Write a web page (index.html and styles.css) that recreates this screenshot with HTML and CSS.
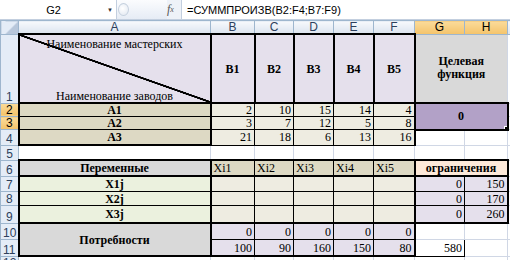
FILE: index.html
```html
<!DOCTYPE html>
<html lang="ru">
<head>
  <meta charset="UTF-8">
  <title>Транспортная задача</title>
  <link rel="stylesheet" href="styles.css">
</head>
<body>
  <div class="formula-bar">
    <div class="name-box"><span class="cell-ref">G2</span><span class="drop">&#9660;</span></div>
    <div class="splitter"><span class="knob"></span></div>
    <div class="fx"><i>f</i><sub>x</sub></div>
    <div class="formula">=СУММПРОИЗВ(B2:F4;B7:F9)</div>
  </div>

  <table class="sheet">
    <colgroup>
      <col class="c-rh">
      <col class="c-a">
      <col class="c-b">
      <col class="c-c">
      <col class="c-d">
      <col class="c-e">
      <col class="c-f">
      <col class="c-g">
      <col class="c-h">
      <col class="c-i">
    </colgroup>

    <tr class="r-head">
      <th class="corner"></th>
      <th class="ch">A</th>
      <th class="ch">B</th>
      <th class="ch">C</th>
      <th class="ch">D</th>
      <th class="ch">E</th>
      <th class="ch">F</th>
      <th class="ch sel">G</th>
      <th class="ch sel">H</th>
      <th class="ch"></th>
    </tr>

    <tr class="r1">
      <th class="rh">1</th>
      <td class="a1 thick">
        <div class="diag">
          <span>Наименование мастерских</span>
          <span>Наименование заводов</span>
        </div>
      </td>
      <td class="lav thick bold mid">B1</td>
      <td class="lav thick bold mid">B2</td>
      <td class="lav thick bold mid">B3</td>
      <td class="lav thick bold mid">B4</td>
      <td class="lav thick bold mid">B5</td>
      <td colspan="2" class="goal bold mid">Целевая<br>функция</td>
      <td class="gl"></td>
    </tr>

    <tr class="r2">
      <th class="rh sel">2</th>
      <td class="tan bold mid side">A1</td>
      <td class="beige num">2</td>
      <td class="beige num">10</td>
      <td class="beige num">15</td>
      <td class="beige num">14</td>
      <td class="beige num edge">4</td>
      <td colspan="2" rowspan="2" class="result bold mid">0<span class="handle"></span></td>
      <td class="gl"></td>
    </tr>
    <tr class="r3">
      <th class="rh sel">3</th>
      <td class="tan bold mid side">A2</td>
      <td class="beige num">3</td>
      <td class="beige num">7</td>
      <td class="beige num">12</td>
      <td class="beige num">5</td>
      <td class="beige num edge">8</td>
      <td class="gl"></td>
    </tr>
    <tr class="r4">
      <th class="rh">4</th>
      <td class="tan bold mid side low">A3</td>
      <td class="beige num low">21</td>
      <td class="beige num low">18</td>
      <td class="beige num low">6</td>
      <td class="beige num low">13</td>
      <td class="beige num edge low">16</td>
      <td class="gl"></td>
      <td class="gl"></td>
      <td class="gl"></td>
    </tr>

    <tr class="r5">
      <th class="rh">5</th>
      <td class="gl"></td>
      <td class="gl"></td>
      <td class="gl"></td>
      <td class="gl"></td>
      <td class="gl"></td>
      <td class="gl"></td>
      <td class="gl"></td>
      <td class="gl"></td>
      <td class="gl"></td>
    </tr>

    <tr class="r6">
      <th class="rh">6</th>
      <td class="grey bold mid thick">Переменные</td>
      <td class="tan var top">Xi1</td>
      <td class="tan var top">Xi2</td>
      <td class="tan var top">Xi3</td>
      <td class="tan var top">Xi4</td>
      <td class="tan var top edge">Xi5</td>
      <td colspan="2" class="peach bold mid thick">ограничения</td>
      <td class="gl"></td>
    </tr>
    <tr class="r7">
      <th class="rh">7</th>
      <td class="green bold mid side">X1j</td>
      <td class="beige"></td>
      <td class="beige"></td>
      <td class="beige"></td>
      <td class="beige"></td>
      <td class="beige edge"></td>
      <td class="lav num lside">0</td>
      <td class="lav num edge">150</td>
      <td class="gl"></td>
    </tr>
    <tr class="r8">
      <th class="rh">8</th>
      <td class="green bold mid side">X2j</td>
      <td class="beige"></td>
      <td class="beige"></td>
      <td class="beige"></td>
      <td class="beige"></td>
      <td class="beige edge"></td>
      <td class="lav num lside">0</td>
      <td class="lav num edge">170</td>
      <td class="gl"></td>
    </tr>
    <tr class="r9">
      <th class="rh">9</th>
      <td class="green bold mid side">X3j</td>
      <td class="beige"></td>
      <td class="beige"></td>
      <td class="beige"></td>
      <td class="beige"></td>
      <td class="beige edge"></td>
      <td class="lav num lside low">0</td>
      <td class="lav num edge low">260</td>
      <td class="gl"></td>
    </tr>
    <tr class="r10">
      <th class="rh">10</th>
      <td rowspan="2" class="grey bold mid thick">Потребности</td>
      <td class="lav num split">0</td>
      <td class="lav num split">0</td>
      <td class="lav num split">0</td>
      <td class="lav num split">0</td>
      <td class="lav num split edge">0</td>
      <td class="gl"></td>
      <td class="gl"></td>
      <td class="gl"></td>
    </tr>
    <tr class="r11">
      <th class="rh">11</th>
      <td class="lav num low">100</td>
      <td class="lav num low">90</td>
      <td class="lav num low">160</td>
      <td class="lav num low">150</td>
      <td class="lav num edge low">80</td>
      <td class="total num">580</td>
      <td class="gl"></td>
      <td class="gl"></td>
    </tr>
    <tr class="r12">
      <th class="rh">12</th>
      <td class="gl"></td>
      <td class="gl"></td>
      <td class="gl"></td>
      <td class="gl"></td>
      <td class="gl"></td>
      <td class="gl"></td>
      <td class="gl"></td>
      <td class="gl"></td>
      <td class="gl"></td>
    </tr>
  </table>
</body>
</html>
```

FILE: styles.css
```css
body {
  margin: 0;
  width: 510px;
  height: 260px;
  overflow: hidden;
  background: #fff;
  font-family: "Liberation Serif", serif;
}

/* formula bar */
.formula-bar {
  display: flex;
  height: 19px;
  border-bottom: 1px solid #c3cfdf;
  font-family: "Liberation Sans", sans-serif;
  font-size: 11px;
  color: #000;
}
.name-box {
  width: 116px;
  display: flex;
  align-items: center;
  border-right: 1px solid #c3cfdf;
  background: #fff;
}
.cell-ref {
  flex: 1;
  text-align: center;
}
.drop {
  font-size: 6px;
  width: 9px;
  color: #333;
}
.splitter {
  width: 50px;
  display: flex;
  align-items: center;
  background: linear-gradient(#fbfcfe, #e6ecf5);
}
.knob {
  width: 9px;
  height: 11px;
  margin-left: 1px;
  border-radius: 50%;
  border: 1px solid #c5d0de;
  background: radial-gradient(circle at 40% 40%, #fff, #dfe6f0);
}
.fx {
  width: 14px;
  display: flex;
  align-items: center;
  font-family: "Liberation Serif", serif;
  font-size: 12px;
  color: #555;
  background: #eef2f8;
  border-right: 1px solid #c3cfdf;
}
.fx sub {
  font-size: 8px;
  font-style: italic;
}
.formula {
  flex: 1;
  display: flex;
  align-items: center;
  padding-left: 5px;
}

/* sheet grid */
.sheet {
  border-collapse: collapse;
  table-layout: fixed;
  width: 513px;
}
.c-rh { width: 18px; }
.c-a { width: 192px; }
.c-b { width: 44px; }
.c-c { width: 39px; }
.c-d { width: 40px; }
.c-e { width: 40px; }
.c-f { width: 41px; }
.c-g { width: 50px; }
.c-h { width: 43px; }
.c-i { width: 6px; }

.sheet td,
.sheet th {
  padding: 0 2px;
  font-size: 12px;
  line-height: 12px;
  white-space: nowrap;
  overflow: hidden;
}

.r-head th { height: 11px; }
.r1 td, .r1 th { height: 67px; }
.r2 td, .r2 th,
.r3 td, .r3 th { height: 12px; }
.r4 td, .r4 th { height: 14px; }
.r5 td, .r5 th { height: 13px; }
.r6 td, .r6 th,
.r7 td, .r7 th { height: 14px; }
.r8 td, .r8 th { height: 13px; }
.r9 td, .r9 th { height: 16px; }
.r10 td, .r10 th { height: 15px; }
.r11 td, .r11 th { height: 15px; }
.r12 td, .r12 th { height: 10px; }

.corner {
  background: linear-gradient(135deg, #e4ecf7 55%, #b8c7db 55%);
  border: 1px solid #9eb6ce;
}
.ch {
  font-family: "Liberation Sans", sans-serif;
  font-size: 11px;
  font-weight: normal;
  color: #2d3f5c;
  background: linear-gradient(#f7f9fc, #dce4ef);
  border: 1px solid #9eb6ce;
}
.rh {
  font-family: "Liberation Sans", sans-serif;
  font-size: 10px;
  font-weight: normal;
  color: #2d3f5c;
  background: #e4ecf7;
  border: 1px solid #9eb6ce;
  vertical-align: bottom;
}
.sel {
  background: linear-gradient(#fbdb9a, #f4c36a);
  color: #000;
}
.gl {
  border: 1px solid #d0d7e5;
}

.bold {
  font-weight: bold;
  font-size: 11.5px;
}
.mid { text-align: center; vertical-align: middle; }
.num {
  text-align: right;
  padding-right: 1px;
  border: 1px solid #000;
}
.var {
  text-align: left;
  padding-left: 1px;
  border: 1px solid #000;
}

.thick { border: 2px solid #000; }
.side { border-left: 2px solid #000; border-right: 2px solid #000; border-top: 1px solid #000; border-bottom: 1px solid #000; }
.edge { border-right: 2px solid #000; }
.lside { border-left: 2px solid #000; }
.low { border-bottom: 2px solid #000; }
.top { border-top: 2px solid #000; border-bottom: 2px solid #000; }
.split { border-top: 2px solid #000; }

.a1 {
  padding: 0;
  vertical-align: top;
  font-size: 12.5px;
  background: linear-gradient(to top right, #e5e0ec calc(50% - 1.2px), #000 calc(50% - 0.8px), #000 calc(50% + 0.8px), #e5e0ec calc(50% + 1.2px));
}
.diag {
  height: 67px;
  display: flex;
  flex-direction: column;
  justify-content: space-between;
  align-items: center;
  padding-top: 3px;
  box-sizing: border-box;
}

.lav { background: #e5e0ec; }
.tan { background: #ddd9c4; }
.beige { background: #eeece1; border: 1px solid #000; }
.green { background: #ebf1de; }
.grey { background: #d9d9d9; }
.peach { background: #fde9d9; }

.sheet .goal {
  background: #d9d9d9;
  border-bottom: 1px solid #c0c0c0;
  line-height: 13.5px;
}
.result {
  position: relative;
  background: #b2a1c7;
  border: 2px solid #000;
}
.handle {
  position: absolute;
  right: -3px;
  bottom: -3px;
  width: 4px;
  height: 4px;
  background: #000;
  border: 1px solid #fff;
}
.total {
  background: #fff;
  border: 1px solid #000;
}
.beige.edge { border-right: 2px solid #000; }
```
